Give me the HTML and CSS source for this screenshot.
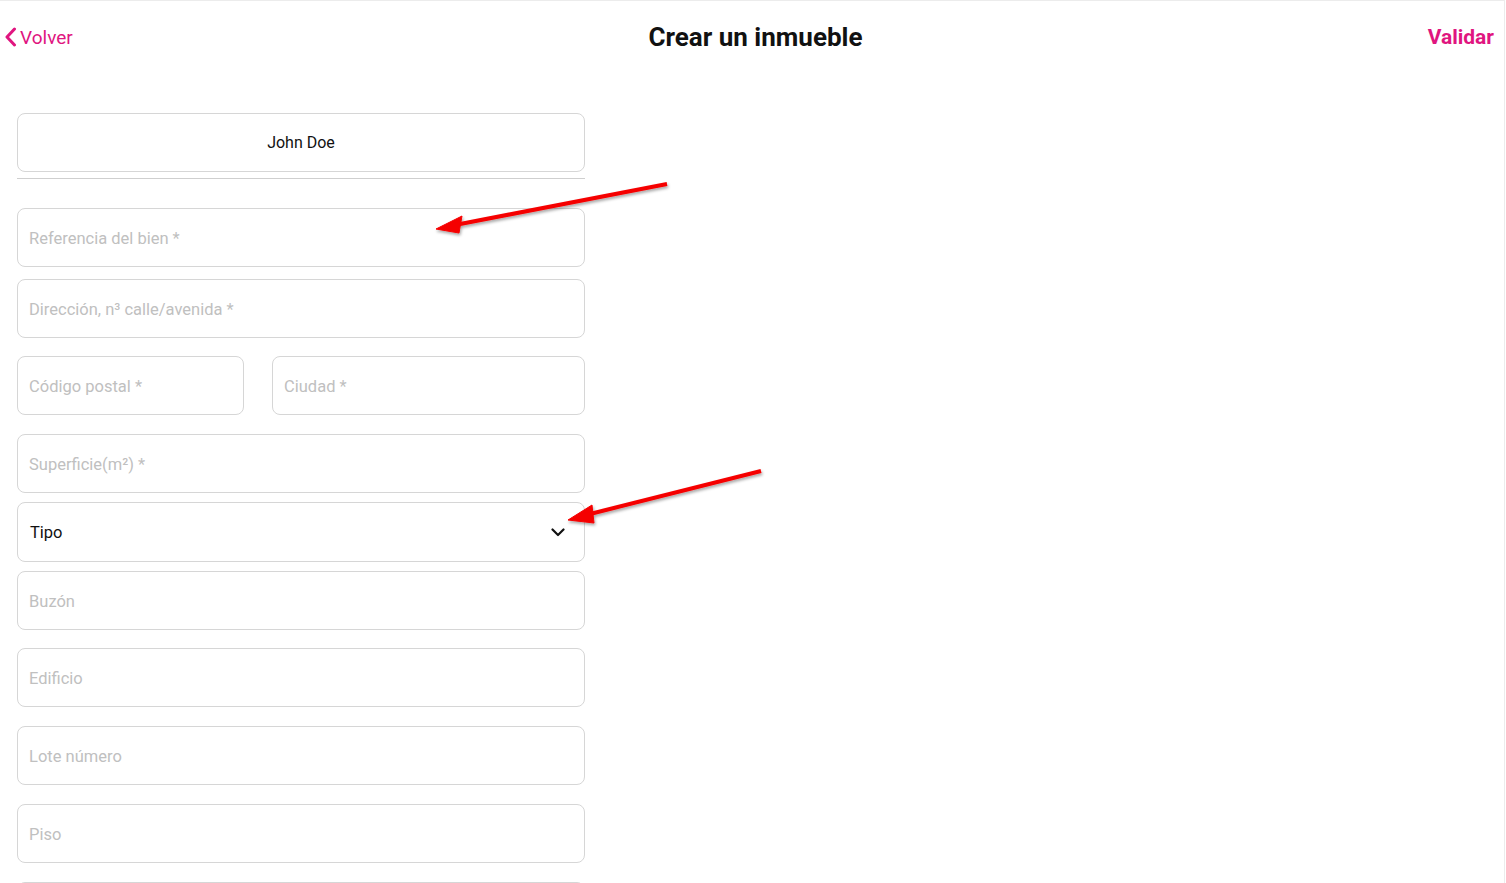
FILE: index.html
```html
<!DOCTYPE html>
<html lang="es">
<head>
  <meta charset="UTF-8" />
  <meta name="viewport" content="width=device-width, initial-scale=1.0" />
  <title>Crear un inmueble</title>
  <link rel="stylesheet" href="styles.css">
</head>
<body>
  <div class="screen">
    <header class="topbar">
      <a class="back" href="#">
        <svg width="13" height="20" viewBox="0 0 13 20"><path d="M10.5 2 L3 10 L10.5 18" fill="none" stroke="#e0157f" stroke-width="3" stroke-linecap="round" stroke-linejoin="round"/></svg>
        <span>Volver</span>
      </a>
      <h1>Crear un inmueble</h1>
      <a class="validate" href="#">Validar</a>
    </header>

    <form class="form">
      <div class="owner">John Doe</div>
      <hr class="sep" />

      <input class="field f-ref" type="text" placeholder="Referencia del bien *" />
      <input class="field f-addr" type="text" placeholder="Dirección, n³ calle/avenida *" />

      <div class="row">
        <input class="field cp" type="text" placeholder="Código postal *" />
        <input class="field city" type="text" placeholder="Ciudad *" />
      </div>

      <input class="field f-surf" type="text" placeholder="Superficie(m²) *" />

      <div class="field select">
        <span>Tipo</span>
        <svg width="14" height="9" viewBox="0 0 14 9"><path d="M1.5 1.5 L7 7 L12.5 1.5" fill="none" stroke="#111" stroke-width="2.2" stroke-linecap="round" stroke-linejoin="round"/></svg>
      </div>

      <input class="field f-box" type="text" placeholder="Buzón" />
      <input class="field f-gap" type="text" placeholder="Edificio" />
      <input class="field f-gap2" type="text" placeholder="Lote número" />
      <input class="field f-gap2" type="text" placeholder="Piso" />
      <input class="field f-gap2" type="text" placeholder="Puerta" />
    </form>

    <svg class="arrows" width="1506" height="883" viewBox="0 0 1506 883">
      <defs>
        <filter id="sh" x="-10%" y="-50%" width="120%" height="200%">
          <feDropShadow dx="1" dy="2" stdDeviation="1.5" flood-color="#000" flood-opacity="0.35"/>
        </filter>
      </defs>
      <g filter="url(#sh)" fill="#f50000" stroke="#f50000">
        <line x1="667" y1="184" x2="455" y2="225" stroke-width="4" />
        <polygon points="436,229 462,216 459,233" stroke-width="1" />
        <line x1="761" y1="471" x2="586" y2="515" stroke-width="4" />
        <polygon points="568,520 592,505 594,523" stroke-width="1" />
      </g>
    </svg>
  </div>
</body>
</html>
```

FILE: styles.css
```css
body {
  margin: 0;
  font-family: Roboto, "Liberation Sans", sans-serif;
  background: #ffffff;
}
.screen {
  position: relative;
  width: 1504px;
  height: 883px;
  overflow: hidden;
  border-top: 1px solid #ececec;
  border-right: 1px solid #ececec;
}
.topbar {
  display: flex;
  align-items: center;
  justify-content: space-between;
  height: 72px;
  padding: 0 10px 0 4px;
  position: relative;
}
.back {
  display: flex;
  align-items: center;
  gap: 3px;
  color: #e0157f;
  text-decoration: none;
  font-size: 19px;
}
.topbar h1 {
  position: absolute;
  left: 7px;
  right: 0;
  margin: 0;
  text-align: center;
  font-size: 26px;
  font-weight: 700;
  color: #111;
  pointer-events: none;
}
.validate {
  color: #e0157f;
  text-decoration: none;
  font-weight: 700;
  font-size: 21px;
}
.form {
  display: flex;
  flex-direction: column;
  width: 568px;
  margin: 40px 0 0 17px;
}
.owner {
  box-sizing: border-box;
  height: 59px;
  border: 1px solid #d6d6d6;
  border-radius: 8px;
  display: flex;
  align-items: center;
  justify-content: center;
  font-size: 16px;
  color: #111;
}
.sep {
  margin: 6px 0 0;
  border: none;
  border-top: 1px solid #cfcfcf;
}
.field {
  box-sizing: border-box;
  flex-shrink: 0;
  height: 59px;
  border: 1px solid #d6d6d6;
  border-radius: 8px;
  padding: 1px 11px 0;
  font-family: inherit;
  font-size: 16.5px;
  color: #111;
  background: #fff;
  outline: none;
}
.field::placeholder {
  color: #c0c0c0;
}
.f-ref { margin-top: 29px; }
.f-addr { margin-top: 12px; }
.row {
  display: flex;
  gap: 28px;
  margin-top: 18px;
}
.cp { width: 227px; }
.city { flex: 1; }
.f-surf { margin-top: 19px; }
.select {
  margin-top: 9px;
  display: flex;
  align-items: center;
  justify-content: space-between;
  padding: 0 19px 0 12px;
  height: 60px;
}
.f-box { margin-top: 9px; }
.f-gap { margin-top: 18px; }
.f-gap2 { margin-top: 19px; }
.arrows {
  position: absolute;
  left: 0;
  top: -1px;
  pointer-events: none;
}
```
